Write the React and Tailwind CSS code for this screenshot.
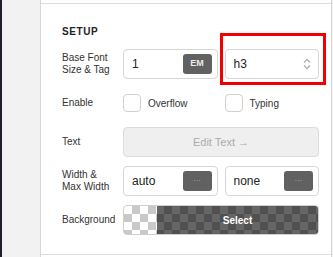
import React from 'react';

const Label = ({ children }) => (
  <div className="w-[61px] shrink-0 text-[10px] leading-[12px] text-[#333]">{children}</div>
);

const DarkButton = ({ children, dots }) => (
  <div
    className={`flex h-[20px] w-[29px] items-center justify-center rounded-[3px] bg-[#616161] ${
      dots ? 'text-[8px] text-[#b8b8b8]' : 'text-[9px] font-bold text-[#ececec]'
    }`}
  >
    {children}
  </div>
);

const Field = ({ value, button }) => (
  <div className="flex h-[30px] items-center justify-between rounded-[4px] border border-[#d6d6d6] bg-white pl-[8px] pr-[5px]">
    <span className="text-[12px] text-[#222]">{value}</span>
    {button}
  </div>
);

const Check = ({ label }) => (
  <div className="flex items-center gap-[7px]">
    <div className="h-[18px] w-[18px] rounded-[4px] border border-[#cfcfcf] bg-white" />
    <span className="text-[10px] text-[#333]">{label}</span>
  </div>
);

const App = () => {
  return (
    <div className="flex h-[257px] w-[333px] overflow-hidden bg-white font-['Liberation_Sans',Arial,sans-serif]">
      {/* rail */}
      <div className="w-[2px] bg-[#1e1f2e]" />
      <div className="w-[39px] border-r border-[#d8d8d8] bg-[#f2f2f2]" />

      {/* panel */}
      <div className="flex w-[291px] flex-col border-r border-[#d4d4d4]">
        <div className="h-[3px]" />
        <div className="flex h-[252px] flex-col border-y border-[#dddddd] pl-[21px] pr-[12px] pt-[22px]">
          <div className="mb-[11px] text-[10px] font-bold leading-[12px] tracking-[0.6px] text-[#222]">SETUP</div>

          <div className="flex flex-col gap-[9px]">
            <div className="flex h-[30px] items-center">
              <Label>
                Base Font
                <br />
                Size &amp; Tag
              </Label>
              <div className="grid flex-1 grid-cols-2 gap-[7px]">
                <Field value="1" button={<DarkButton>EM</DarkButton>} />
                <div className="relative">
                  <div className="flex h-[30px] items-center justify-between rounded-[4px] border border-[#d6d6d6] bg-white pl-[8px] pr-[7px]">
                    <span className="text-[12px] text-[#222]">h3</span>
                    <svg width="8" height="12" viewBox="0 0 8 12" fill="none" stroke="#b0b0b0" strokeWidth="1.3">
                      <path d="M1 4.5 L4 1.5 L7 4.5" />
                      <path d="M1 7.5 L4 10.5 L7 7.5" />
                    </svg>
                  </div>
                  <div className="absolute -bottom-[6px] -left-[5px] -right-[7px] -top-[16px] border-[3px] border-[#f20000]" />
                </div>
              </div>
            </div>

            <div className="flex h-[30px] items-center">
              <Label>Enable</Label>
              <div className="grid flex-1 grid-cols-2 gap-[7px]">
                <Check label="Overflow" />
                <Check label="Typing" />
              </div>
            </div>

            <div className="flex h-[30px] items-center">
              <Label>Text</Label>
              <div className="flex h-[30px] flex-1 items-center justify-center rounded-[4px] border border-[#dcdcdc] bg-[#efefef] text-[11px] text-[#ababab]">
                Edit Text →
              </div>
            </div>

            <div className="flex h-[30px] items-center">
              <Label>
                Width &amp;
                <br />
                Max Width
              </Label>
              <div className="grid flex-1 grid-cols-2 gap-[7px]">
                <Field value="auto" button={<DarkButton dots>···</DarkButton>} />
                <Field value="none" button={<DarkButton dots>···</DarkButton>} />
              </div>
            </div>

            <div className="flex h-[30px] items-center">
              <Label>Background</Label>
              <div className="flex h-[30px] flex-1 overflow-hidden rounded-[4px] border border-[#cfcfcf] bg-[repeating-conic-gradient(#c9c9c9_0%_25%,#ffffff_0%_50%)] bg-[length:16px_16px]">
                <div className="w-[33px]" />
                <div className="flex flex-1 items-center justify-center bg-black/60 text-[10px] font-bold text-white">
                  Select
                </div>
              </div>
            </div>
          </div>
        </div>
      </div>
      <div className="flex-1 bg-[#f4f4f4]" />
    </div>
  );
};

export default App;
